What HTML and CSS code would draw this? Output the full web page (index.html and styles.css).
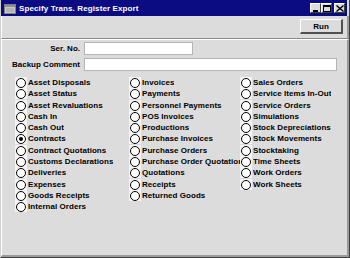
FILE: index.html
```html
<!DOCTYPE html>
<html>
<head>
<meta charset="utf-8">
<link rel="stylesheet" href="styles.css">
</head>
<body>
<div class="window">
  <div class="titlebar">
    <svg class="ticon" width="12" height="10" viewBox="0 0 12 10"><rect x="0.5" y="0.5" width="11" height="9" fill="#c8c8c8" stroke="#808080"/><rect x="1" y="1" width="10" height="2" fill="#909090"/><line x1="2" y1="5" x2="10" y2="5" stroke="#a0a0a0"/><line x1="2" y1="7" x2="10" y2="7" stroke="#a0a0a0"/></svg>
    <span class="title">Specify Trans. Register Export</span>
    <div class="wbtns">
      <span class="wbtn"><svg width="8" height="7" viewBox="0 0 8 7"><rect x="1" y="5" width="5" height="2" fill="#000"/></svg></span>
      <span class="wbtn"><svg width="8" height="7" viewBox="0 0 8 7"><rect x="0.5" y="0.5" width="7" height="6" fill="none" stroke="#000"/><rect x="0" y="0" width="8" height="2" fill="#000"/></svg></span>
      <span class="wbtn gap"><svg width="8" height="7" viewBox="0 0 8 7"><path d="M0.5 0.5 L7.5 6.5 M7.5 0.5 L0.5 6.5" stroke="#000" stroke-width="1.4"/></svg></span>
    </div>
  </div>
  <div class="toolbar">
    <div class="run">Run</div>
  </div>
  <div class="content">
    <div class="fields">
      <label class="lbl">Ser. No.</label><div class="input short"></div>
      <label class="lbl">Backup Comment</label><div class="input long"></div>
    </div>
    <div class="options">
      <div class="col">
        <div class="opt"><span class="radio"></span><span class="txt">Asset Disposals</span></div>
        <div class="opt"><span class="radio"></span><span class="txt">Asset Status</span></div>
        <div class="opt"><span class="radio"></span><span class="txt">Asset Revaluations</span></div>
        <div class="opt"><span class="radio"></span><span class="txt">Cash In</span></div>
        <div class="opt"><span class="radio"></span><span class="txt">Cash Out</span></div>
        <div class="opt"><span class="radio on"></span><span class="txt">Contracts</span></div>
        <div class="opt"><span class="radio"></span><span class="txt">Contract Quotations</span></div>
        <div class="opt"><span class="radio"></span><span class="txt">Customs Declarations</span></div>
        <div class="opt"><span class="radio"></span><span class="txt">Deliveries</span></div>
        <div class="opt"><span class="radio"></span><span class="txt">Expenses</span></div>
        <div class="opt"><span class="radio"></span><span class="txt">Goods Receipts</span></div>
        <div class="opt"><span class="radio"></span><span class="txt">Internal Orders</span></div>
      </div>
      <div class="col c2">
        <div class="opt"><span class="radio"></span><span class="txt">Invoices</span></div>
        <div class="opt"><span class="radio"></span><span class="txt">Payments</span></div>
        <div class="opt"><span class="radio"></span><span class="txt">Personnel Payments</span></div>
        <div class="opt"><span class="radio"></span><span class="txt">POS Invoices</span></div>
        <div class="opt"><span class="radio"></span><span class="txt">Productions</span></div>
        <div class="opt"><span class="radio"></span><span class="txt">Purchase Invoices</span></div>
        <div class="opt"><span class="radio"></span><span class="txt">Purchase Orders</span></div>
        <div class="opt"><span class="radio"></span><span class="txt">Purchase Order Quotations</span></div>
        <div class="opt"><span class="radio"></span><span class="txt">Quotations</span></div>
        <div class="opt"><span class="radio"></span><span class="txt">Receipts</span></div>
        <div class="opt"><span class="radio"></span><span class="txt">Returned Goods</span></div>
      </div>
      <div class="col c3">
        <div class="opt"><span class="radio"></span><span class="txt">Sales Orders</span></div>
        <div class="opt"><span class="radio"></span><span class="txt">Service Items In-Out</span></div>
        <div class="opt"><span class="radio"></span><span class="txt">Service Orders</span></div>
        <div class="opt"><span class="radio"></span><span class="txt">Simulations</span></div>
        <div class="opt"><span class="radio"></span><span class="txt">Stock Depreciations</span></div>
        <div class="opt"><span class="radio"></span><span class="txt">Stock Movements</span></div>
        <div class="opt"><span class="radio"></span><span class="txt">Stocktaking</span></div>
        <div class="opt"><span class="radio"></span><span class="txt">Time Sheets</span></div>
        <div class="opt"><span class="radio"></span><span class="txt">Work Orders</span></div>
        <div class="opt"><span class="radio"></span><span class="txt">Work Sheets</span></div>
      </div>
    </div>
  </div>
</div>
</body>
</html>
```
FILE: styles.css
```css
* { box-sizing: border-box; }
html, body { margin: 0; padding: 0; background: #dcdcdc; }
body {
  font-family: "Liberation Sans", Arial, sans-serif;
  font-weight: bold;
  font-size: 8px;
  color: #000;
}
.window {
  width: 350px;
  height: 258px;
  background: #dcdcdc;
  border-left: 1px solid #cfcfcf;
  border-right: 1px solid #404040;
  border-bottom: 1px solid #404040;
  display: flex;
  flex-direction: column;
  overflow: hidden;
}
.window > .titlebar { margin-right: 2px; }
.titlebar {
  height: 16px;
  background: #0c0c82;
  color: #fff;
  display: flex;
  align-items: center;
  padding-left: 3px;
  padding-right: 2px;
}
.ticon { flex: none; margin-top: 1px; }
.title {
  margin-left: 3px;
  font-size: 8px;
  letter-spacing: 0.12px;
  white-space: nowrap;
}
.wbtns {
  margin-left: auto;
  display: flex;
  align-items: center;
}
.wbtn {
  width: 11px;
  height: 10px;
  background: #dcdcdc;
  border-top: 1px solid #fff;
  border-left: 1px solid #fff;
  border-right: 1px solid #404040;
  border-bottom: 1px solid #404040;
  display: flex;
  align-items: center;
  justify-content: center;
}
.wbtn.gap { margin-left: 2px; }
.toolbar {
  height: 23px;
  border-left: 1px solid #fff;
  border-right: 2px solid #9a9a9a;
  border-bottom: 1px solid #8a8a8a;
  display: flex;
  justify-content: flex-end;
  align-items: flex-start;
  padding-top: 3px;
  padding-right: 4px;
}
.run {
  width: 43px;
  height: 15px;
  border-top: 1px solid #fff;
  border-left: 1px solid #fff;
  border-right: 2px solid #505050;
  border-bottom: 2px solid #505050;
  display: flex;
  align-items: center;
  justify-content: center;
  padding-top: 1px;
}
.content {
  flex: 1;
  border-top: 1px solid #fff;
  border-left: 1px solid #fff;
  border-right: 2px solid #9a9a9a;
  border-bottom: 2px solid #9a9a9a;
  padding-top: 2px;
}
.fields {
  display: grid;
  grid-template-columns: 78px auto;
  column-gap: 4px;
  row-gap: 3px;
  align-items: center;
}
.lbl { text-align: right; white-space: nowrap; }
.input {
  height: 13px;
  background: #fff;
  border: 1px solid #b4b4b4;
}
.input.short { width: 109px; }
.input.long { width: 253px; }
.options {
  margin-top: 6px;
  display: grid;
  grid-template-columns: 114px 111px 1fr;
  padding-left: 13px;
}
.col { display: flex; flex-direction: column; min-width: 0; }
.opt {
  height: 11.27px;
  display: flex;
  align-items: center;
  min-width: 0;
}
.radio {
  flex: none;
  width: 12px;
  height: 11px;
  background: #f4f4f4;
  position: relative;
}
.radio::before {
  content: "";
  position: absolute;
  left: 1px;
  top: 1px;
  width: 10px;
  height: 10px;
  border-radius: 50%;
  border: 1px solid #000;
  background: #fff;
  box-sizing: border-box;
}
.radio.on::after {
  content: "";
  position: absolute;
  left: 4px;
  top: 4px;
  width: 4px;
  height: 4px;
  border-radius: 50%;
  background: #000;
}
.txt {
  margin-left: 1px;
  white-space: nowrap;
  overflow: hidden;
  letter-spacing: 0.05px;
}
```
